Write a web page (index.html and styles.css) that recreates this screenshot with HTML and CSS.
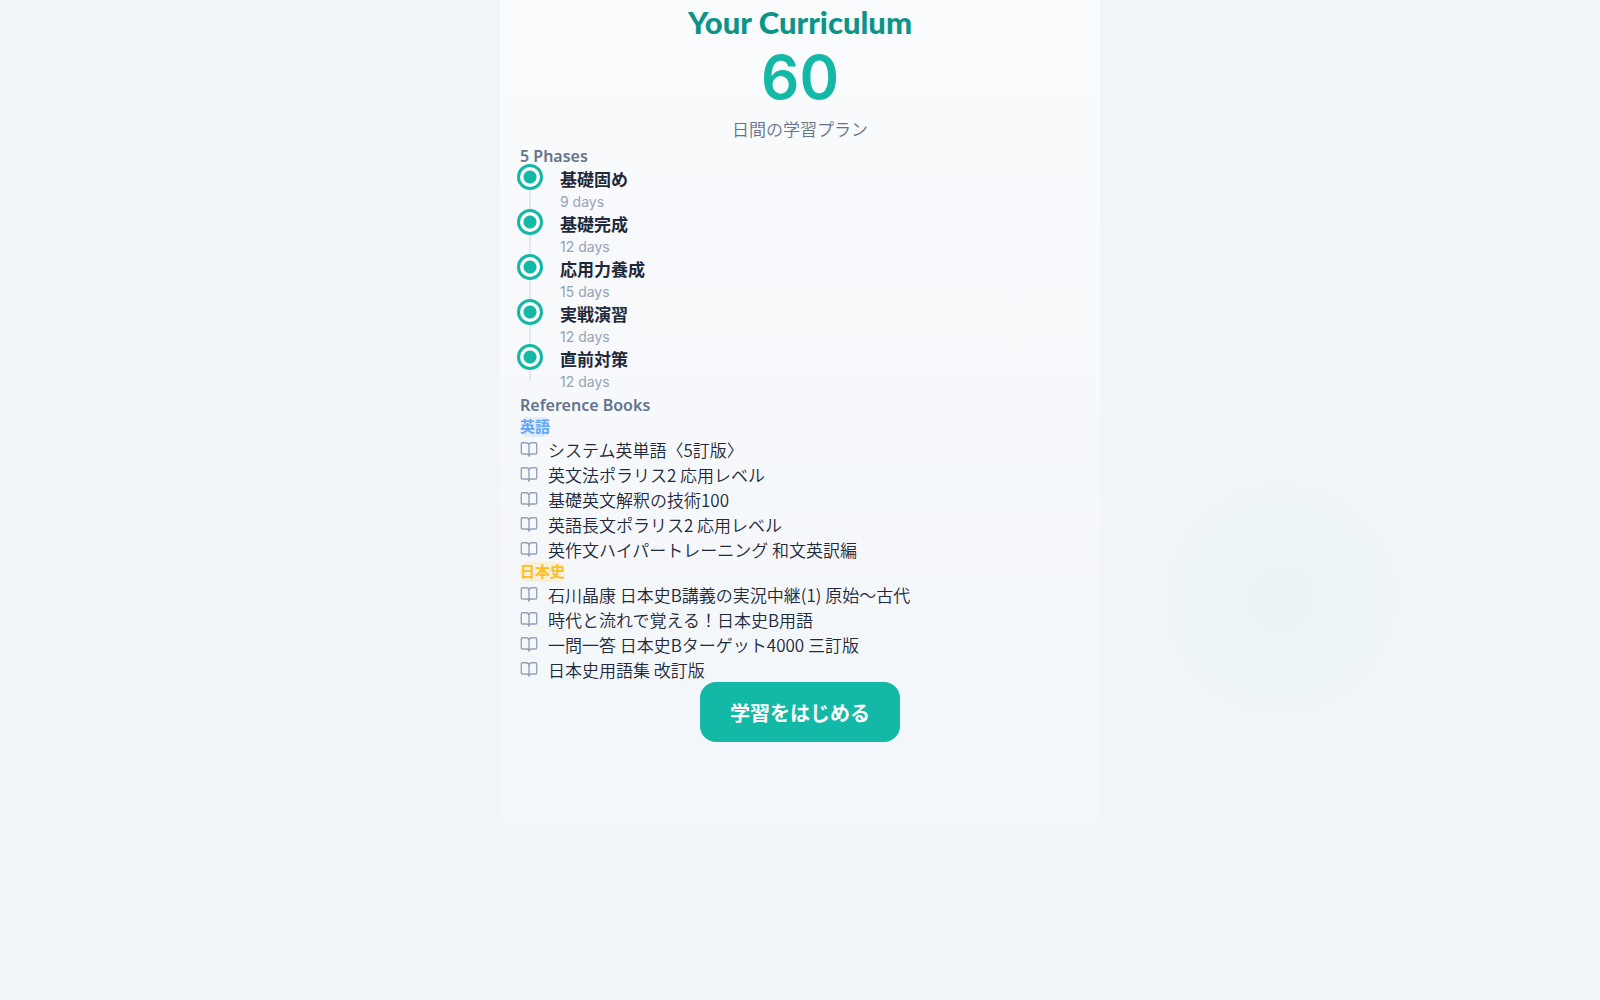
FILE: index.html
```html
<!DOCTYPE html>
<html lang="ja">
<head>
<meta charset="utf-8">
<meta name="viewport" content="width=device-width, initial-scale=1">
<title>Your Curriculum</title>
<link rel="stylesheet" href="styles.css">
</head>
<body>
<svg class="sprite" aria-hidden="true">
  <symbol id="book" viewBox="0 0 18 18">
    <path d="M9 4.500a2.800 2.800 0 0 0-2.800-2.800H2.300a1 1 0 0 0-1 1v9.300a1 1 0 0 0 1 1h4.400a2.300 2.300 0 0 1 2.300 2.300zM9 4.500a2.800 2.800 0 0 1 2.800-2.800h3.900a1 1 0 0 1 1 1v9.300a1 1 0 0 1-1 1h-4.400a2.300 2.300 0 0 0-2.300 2.300z"/>
  </symbol>
</svg>
<main class="sheet">
  <h1 class="title">Your Curriculum</h1>
  <p class="total">60</p>
  <p class="caption">日間の学習プラン</p>

  <h2 class="label">5 Phases</h2>
  <ol class="phases">
    <li class="phase"><h3 class="phase-name">基礎固め</h3><p class="phase-days">9 days</p></li>
    <li class="phase"><h3 class="phase-name">基礎完成</h3><p class="phase-days">12 days</p></li>
    <li class="phase"><h3 class="phase-name">応用力養成</h3><p class="phase-days">15 days</p></li>
    <li class="phase"><h3 class="phase-name">実戦演習</h3><p class="phase-days">12 days</p></li>
    <li class="phase"><h3 class="phase-name">直前対策</h3><p class="phase-days">12 days</p></li>
  </ol>

  <h2 class="label">Reference Books</h2>
  <h3 class="subject english">英語</h3>
  <ul class="books">
    <li class="book"><svg class="icon" aria-hidden="true"><use href="#book"/></svg>システム英単語〈5訂版〉</li>
    <li class="book"><svg class="icon" aria-hidden="true"><use href="#book"/></svg>英文法ポラリス2 応用レベル</li>
    <li class="book"><svg class="icon" aria-hidden="true"><use href="#book"/></svg>基礎英文解釈の技術100</li>
    <li class="book"><svg class="icon" aria-hidden="true"><use href="#book"/></svg>英語長文ポラリス2 応用レベル</li>
    <li class="book"><svg class="icon" aria-hidden="true"><use href="#book"/></svg>英作文ハイパートレーニング 和文英訳編</li>
  </ul>
  <h3 class="subject history">日本史</h3>
  <ul class="books">
    <li class="book"><svg class="icon" aria-hidden="true"><use href="#book"/></svg>石川晶康 日本史B講義の実況中継(1) 原始〜古代</li>
    <li class="book"><svg class="icon" aria-hidden="true"><use href="#book"/></svg>時代と流れで覚える！日本史B用語</li>
    <li class="book"><svg class="icon" aria-hidden="true"><use href="#book"/></svg>一問一答 日本史Bターゲット4000 三訂版</li>
    <li class="book"><svg class="icon" aria-hidden="true"><use href="#book"/></svg>日本史用語集 改訂版</li>
  </ul>
  <button class="start" type="button">学習をはじめる</button>
</main>
</body>
</html>
```
FILE: styles.css
```css
*,
*::before {
  box-sizing: border-box;
  margin: 0;
  padding: 0;
}

body {
  min-height: 100vh;
  display: flex;
  justify-content: center;
  font-family: Inter, "Noto Sans CJK JP", sans-serif;
  color: #1e293b;
  background:
    radial-gradient(circle at 80% 60%, rgba(20, 184, 166, 0.03), rgba(20, 184, 166, 0) 180px),
    radial-gradient(circle at 60% 40%, rgba(20, 184, 166, 0.03), rgba(20, 184, 166, 0) 190px),
    #f1f5f9;
}

ol,
ul {
  list-style: none;
}

.sprite {
  position: absolute;
  width: 0;
  height: 0;
}

.sheet {
  display: flex;
  flex-direction: column;
  align-items: flex-start;
  width: 100%;
  max-width: 600px;
  padding: 2px 20px 20px;
  background: linear-gradient(#fafbfd, #f1f5f9);
}

.title {
  align-self: center;
  font-family: Lato, sans-serif;
  font-size: 31px;
  font-weight: 900;
  line-height: 40px;
  color: #0d9488;
}

.total {
  align-self: center;
  margin-bottom: 2px;
  font-size: 60px;
  font-weight: 600;
  line-height: 70px;
  color: #14b8a6;
}

.caption {
  align-self: center;
  font-family: "Noto Sans CJK JP", sans-serif;
  font-size: 17px;
  font-weight: 350;
  line-height: 30px;
  color: #64748b;
}

.label {
  font-family: "Noto Sans", sans-serif;
  font-size: 16px;
  font-weight: 600;
  line-height: 24px;
  color: #64748b;
}

.phases {
  position: relative;
}

.phases::before {
  content: "";
  position: absolute;
  top: 8px;
  bottom: 12px;
  left: 9px;
  width: 2px;
  background: #e2e8f0;
}

.phase {
  position: relative;
  padding: 0 0 2px 40px;
}

.phase::before {
  content: "";
  position: absolute;
  top: -4px;
  left: -3px;
  width: 26px;
  height: 26px;
  border: 3px solid #14b8a6;
  border-radius: 50%;
  background: radial-gradient(circle, #14b8a6 6px, #ffffff 7px);
}

.phase-name {
  font-size: 17px;
  font-weight: 700;
  line-height: 24px;
}

.phase-days {
  font-size: 14px;
  line-height: 19px;
  color: #94a3b8;
}

.subject {
  border-radius: 8px;
  font-size: 15px;
  font-weight: 600;
  line-height: 20px;
}

.english {
  color: #60a5fa;
  background: #e1edfc;
}

.history {
  color: #fbbf24;
  background: #f9f0dc;
}

.book {
  display: flex;
  align-items: center;
  gap: 10px;
  font-family: "Noto Sans CJK JP", sans-serif;
  font-size: 17px;
  font-weight: 350;
  line-height: 25px;
}

.icon {
  flex: none;
  width: 18px;
  height: 18px;
  fill: none;
  stroke: #94a3b8;
  stroke-width: 1.4;
  stroke-linejoin: round;
}

.start {
  align-self: center;
  min-width: 200px;
  height: 60px;
  border: 0;
  border-radius: 16px;
  font-family: "Noto Sans CJK JP", sans-serif;
  font-size: 20px;
  font-weight: 700;
  color: #ffffff;
  background: #14b8a6;
}
```
